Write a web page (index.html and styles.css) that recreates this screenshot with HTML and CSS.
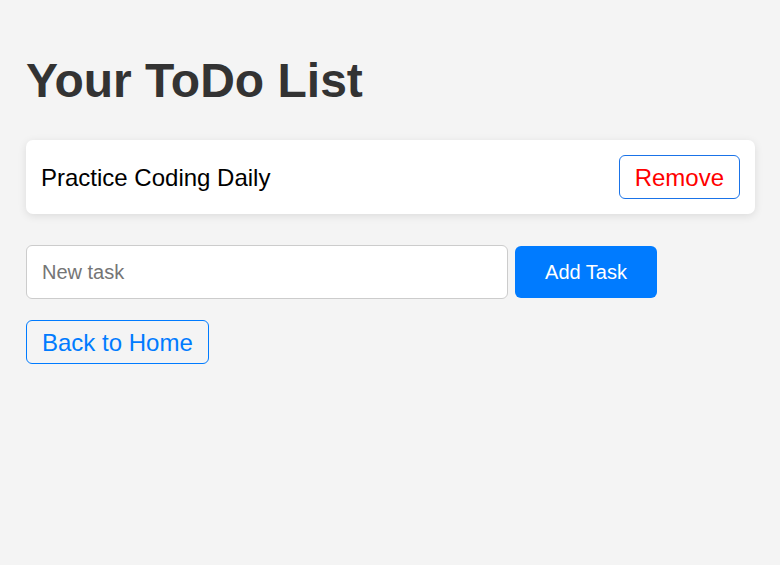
FILE: index.html
```html
<!DOCTYPE html>
<html lang="en">
<head>
<meta charset="utf-8">
<title>Your ToDo List</title>
<link rel="stylesheet" href="styles.css">
</head>
<body>
<main class="page">
  <h1 class="title">Your ToDo List</h1>
  <ul class="list">
    <li class="item">
      <span class="item-text">Practice Coding Daily</span>
      <button class="remove-btn" type="button">Remove</button>
    </li>
  </ul>
  <form class="add-form">
    <input class="task-input" type="text" placeholder="New task">
    <button class="add-btn" type="button">Add Task</button>
  </form>
  <button class="back-btn" type="button">Back to Home</button>
</main>
</body>
</html>
```

FILE: styles.css
```css
html, body {
  margin: 0;
  padding: 0;
  background: #f4f4f4;
}
body {
  font-family: "Liberation Sans", Arial, sans-serif;
}
.page {
  padding: 26px 25px 26px 26px;
}
.title {
  margin: 27px 0 0 0;
  font-size: 48px;
  line-height: 56px;
  font-weight: bold;
  color: #333333;
}
.list {
  list-style: none;
  margin: 31px 0 0 0;
  padding: 0;
}
.item {
  display: flex;
  align-items: center;
  justify-content: space-between;
  background: #ffffff;
  border-radius: 7px;
  padding: 15px;
  box-shadow: 0 2px 8px rgba(0, 0, 0, 0.1);
}
.item-text {
  font-size: 24px;
  padding-top: 1px;
  color: #000000;
}
.remove-btn {
  height: 44px;
  padding: 1px 15px 0;
  font-family: inherit;
  font-size: 24px;
  color: #ff0000;
  background: #ffffff;
  border: 1px solid #1a73e8;
  border-radius: 6px;
}
.add-form {
  display: flex;
  align-items: center;
  gap: 7px;
  margin-top: 31px;
}
.task-input {
  box-sizing: border-box;
  width: 482px;
  height: 54px;
  padding: 0 15px;
  font-family: inherit;
  font-size: 20px;
  color: #333;
  background: #ffffff;
  border: 1px solid #cccccc;
  border-radius: 6px;
}
.task-input::placeholder {
  color: #757575;
}
.add-btn {
  width: 142px;
  height: 52px;
  font-family: inherit;
  font-size: 20px;
  color: #ffffff;
  background: #007bff;
  border: none;
  border-radius: 6px;
}
.back-btn {
  display: block;
  margin-top: 21px;
  height: 44px;
  padding: 1px 15px 0;
  font-family: inherit;
  font-size: 24px;
  color: #007bff;
  background: transparent;
  border: 1px solid #007bff;
  border-radius: 6px;
}
```
